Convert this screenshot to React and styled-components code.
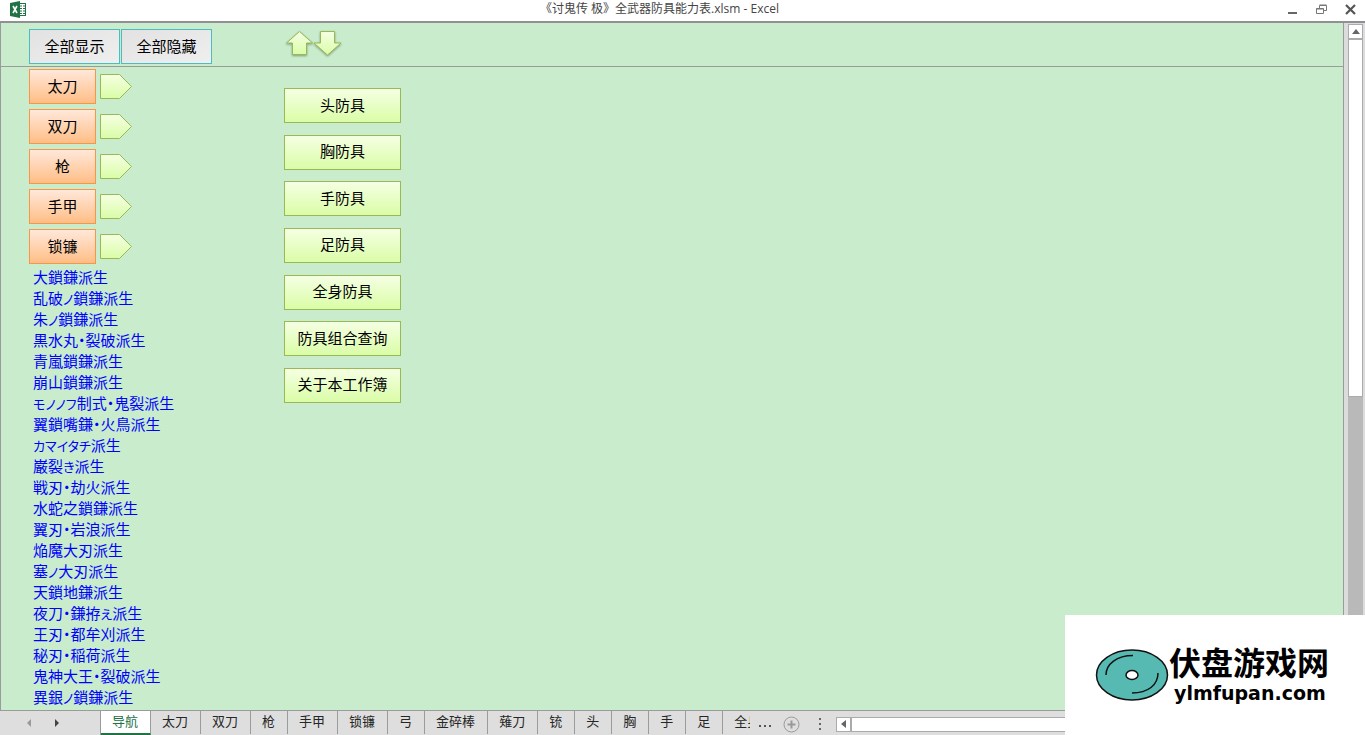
import React from 'react';
import styled, { createGlobalStyle } from 'styled-components';

const GlobalStyle = createGlobalStyle`
  *, *::before, *::after { box-sizing: border-box; }
  body { margin: 0; background: #fff; }
  button { font: inherit; color: inherit; margin: 0; padding: 0; cursor: pointer; }
`;

const Window = styled.div`
  position: relative;
  display: flex;
  flex-direction: column;
  height: 100vh;
  overflow: hidden;
  font-family: 'Noto Sans CJK SC', sans-serif;
  color: #000;
`;

const TitleBar = styled.header`
  display: grid;
  grid-template-columns: 1fr auto 1fr;
  align-items: center;
  flex: none;
  height: 21px;
  padding: 0 8px 2px 10px;
  background: #fff;
`;

const Title = styled.h1`
  margin: 0;
  padding-right: 48px;
  padding-bottom: 1px;
  font: 400 12px/18px 'Open Sans', 'Noto Sans CJK SC', sans-serif;
  color: #444;
  white-space: nowrap;
`;

const WindowControls = styled.div`
  display: flex;
  justify-content: flex-end;
  gap: 15px;
`;

const PlainButton = styled.button`
  display: flex;
  align-items: center;
  justify-content: center;
  flex: none;
  width: ${(p) => p.$width || 14}px;
  height: 14px;
  border: 0;
  background: none;
`;

const Workspace = styled.main`
  display: flex;
  flex: 1;
  min-height: 0;
  border-top: 2px solid #8f8f94;
  background: #dcdcdc;
`;

const Sheet = styled.div`
  flex: 1;
  display: flex;
  flex-direction: column;
  min-width: 0;
  overflow: hidden;
  border: 1px solid #9b9b9b;
  border-top: 0;
  background: #c8eccc;
`;

const FrozenPane = styled.div`
  display: flex;
  flex: none;
  height: 44px;
  padding: 6px 0 0 28px;
  border-bottom: 1px solid #9b9b9b;
`;

const ShapeButton = styled.button`
  width: ${(p) => p.$width}px;
  height: 35px;
  padding-bottom: 2px;
  border: 1px solid;
  font-size: 15px;
  line-height: 20px;
  white-space: nowrap;
`;

const GreyButton = styled(ShapeButton)`
  margin-right: 1px;
  border-color: #4bbcc0;
  background: linear-gradient(160deg, #e2e2e2, #efefef);
`;

const OrangeButton = styled(ShapeButton)`
  border-color: #f79646;
  background: linear-gradient(#ffe8da, #ffbe86);
`;

const GreenButton = styled(ShapeButton)`
  border-color: #98b954;
  background: linear-gradient(#f5ffe3, #dafda7);
`;

const ScrollArrows = styled.div`
  display: flex;
  margin-left: 74px;
`;

const ArrowButton = styled.button`
  width: 27px;
  height: 30px;
  border: 0;
  background: none;

  svg { display: block; overflow: visible; filter: drop-shadow(0 1px 1px rgba(0, 0, 0, 0.35)); }
`;

const Cells = styled.div`
  display: flex;
  flex: 1;
  min-height: 0;
  overflow: hidden;
  padding: 2px 0 0 28px;
`;

const WeaponColumn = styled.nav`
  width: 255px;
`;

const WeaponRow = styled.div`
  display: flex;
  align-items: center;
  gap: 4px;
  margin-bottom: 5px;
`;

const TagButton = styled.button`
  width: 33px;
  height: 26px;
  border: 0;
  background: none;

  svg { display: block; }
`;

const LinkList = styled.ul`
  margin: -3px 0 0;
  padding: 0 0 0 4px;
  list-style: none;
  font: 400 15px/21px 'Noto Sans CJK JP', sans-serif;
  font-feature-settings: 'palt';

  li { height: 21px; }
`;

const DeriveLink = styled.a`
  color: #0000ff;
  text-decoration: none;
  white-space: nowrap;
`;

const Kana = styled.span`
  font-size: 13px;
  line-height: 13px;
`;

const ArmorColumn = styled.nav`
  display: flex;
  flex-direction: column;
  justify-content: space-between;
  height: 315px;
  margin-top: 19px;
`;

const VerticalScroll = styled.div`
  display: flex;
  flex-direction: column;
  flex: none;
  width: 21px;
  padding: 1px 2px 0 4px;
`;

const ScrollButton = styled.button`
  display: flex;
  align-items: center;
  justify-content: center;
  flex: none;
  width: 15px;
  height: 15px;
  border: 1px solid #ababab;
  background: #fff;
`;

const VerticalTrack = styled.div`
  flex: 1;
  background: #b9b9b9;
`;

const VerticalThumb = styled.div`
  height: 53.3%;
  border: 1px solid #ababab;
  background: #fff;
`;

const TabBar = styled.footer`
  display: flex;
  flex: none;
  height: 24px;
  background: #dedede;
  color: #262626;
  font-size: 13px;
  line-height: 20px;
`;

const TabArrows = styled.div`
  display: flex;
  align-items: center;
  flex: none;
  gap: 14px;
  width: 101px;
  padding-left: 22px;
  border-right: 1px solid #9b9b9b;
`;

const Tabs = styled.div`
  display: flex;
  flex: none;
`;

const Tab = styled.button`
  height: 23px;
  padding: 0 12px 4px 11px;
  border: 0;
  border-right: 1px solid #9b9b9b;
  background: none;
  white-space: nowrap;
  line-height: 20px;

  &[aria-selected='true'] {
    height: 24px;
    padding-bottom: 3px;
    border-bottom: 2px solid #217346;
    background: #fff;
    color: #217346;
  }
`;

const CutTab = styled(Tab)`
  width: 27px;
  padding-right: 0;
  border-right: 0;
  overflow: hidden;
  text-align: left;
`;

const TabTools = styled.div`
  display: flex;
  align-items: center;
  flex: none;
  padding: 0 4px 0 6px;
`;

const HorizontalScroll = styled.div`
  display: flex;
  flex: 1;
  align-items: center;
  min-width: 0;
  padding-top: 2px;
`;

const HorizontalThumb = styled.div`
  flex: 1;
  height: 15px;
  border: 1px solid #ababab;
  background: #fff;
`;

const SiteBadge = styled.aside`
  position: absolute;
  right: 0;
  bottom: 0;
  display: flex;
  align-items: center;
  width: 300px;
  height: 120px;
  padding-left: 30px;
  background: #fff;
`;

const BadgeText = styled.div`
  display: flex;
  flex-direction: column;
  gap: 4px;
  font-weight: 700;
  white-space: nowrap;
`;

const BadgeName = styled.span`
  font-size: 32px;
  line-height: 32px;
`;

const BadgeHost = styled.span`
  padding-left: 5px;
  font-family: 'DejaVu Sans', sans-serif;
  font-size: 19px;
  line-height: 24px;
`;

const weapons = ['太刀', '双刀', '枪', '手甲', '锁镰'];

const derivations = [
  '大鎖鎌派生', '乱破ノ鎖鎌派生', '朱ノ鎖鎌派生', '黒水丸・裂破派生', '青嵐鎖鎌派生',
  '崩山鎖鎌派生', 'モノノフ制式・鬼裂派生', '翼鎖嘴鎌・火鳥派生', 'カマイタチ派生', '巌裂き派生',
  '戦刃・劫火派生', '水蛇之鎖鎌派生', '翼刃・岩浪派生', '焔魔大刃派生', '塞ノ大刃派生',
  '天鎖地鎌派生', '夜刀・鎌拵え派生', '王刃・都牟刈派生', '秘刃・稲荷派生', '鬼神大王・裂破派生',
  '異銀ノ鎖鎌派生',
];

const armor = ['头防具', '胸防具', '手防具', '足防具', '全身防具', '防具组合查询', '关于本工作簿'];

const tabs = ['导航', '太刀', '双刀', '枪', '手甲', '锁镰', '弓', '金碎棒', '薙刀', '铳', '头', '胸', '手', '足'];

// Kana are set a little smaller than the kanji around them.
const withKana = (name) =>
  name.split(/([ぁ-ゖァ-ヺ]+)/).map((part, i) => (i % 2 ? <Kana key={i}>{part}</Kana> : part));

const ExcelIcon = () => (
  <svg width="17" height="17" viewBox="0 0 17 17" aria-hidden="true">
    <rect x="8.5" y="2.5" width="7" height="12" fill="#fff" stroke="#217346" />
    <path d="M10 5h2M13 5h2M10 7.5h2M13 7.5h2M10 10h2M13 10h2M10 12.500h2M13 12.500h2" stroke="#217346" strokeWidth="1.200" />
    <path d="M0 2L10 0V17L0 15Z" fill="#217346" />
    <path d="M3 5L7 12M7 5L3 12" stroke="#fff" strokeWidth="1.600" />
  </svg>
);

const Tag = () => (
  <svg width="33" height="26" viewBox="0 0 33 26" aria-hidden="true">
    <path d="M.5.5H19.500L31.500 12.500L19.500 24.500H.5Z" fill="url(#leaf)" stroke="#98b954" />
  </svg>
);

const BlockArrow = ({ down }) => (
  <svg width="27" height="26" viewBox="0 0 27 26" aria-hidden="true">
    <path
      d={down ? 'M6.500 .5H20.500V12H27L13.500 24L0 12H6.500Z' : 'M12.500 .5L25.500 12H19.500V23.500H5.500V12H-.5Z'}
      fill="url(#leaf)"
      stroke="#98b954"
    />
  </svg>
);

const Disc = () => (
  <svg width="74" height="54" viewBox="0 0 74 54" aria-hidden="true">
    <ellipse cx="37" cy="27" rx="35.500" ry="25" fill="#56bab3" stroke="#111" strokeWidth="1.500" />
    <ellipse cx="37" cy="27" rx="6" ry="4.500" fill="#fff" stroke="#111" strokeWidth="1.500" />
    <path d="M11 27C11 16 22 7.500 38 7.500M63 25C63 37 53 45 37 45" fill="none" stroke="#111" strokeWidth="1.500" />
  </svg>
);

export default function App() {
  return (
    <Window>
      <GlobalStyle />
      <svg width="0" height="0" style={{ position: 'absolute' }} aria-hidden="true">
        <defs>
          <linearGradient id="leaf" x1="0" y1="0" x2="0" y2="1">
            <stop offset="0" stopColor="#f5ffe3" />
            <stop offset="1" stopColor="#dafda7" />
          </linearGradient>
        </defs>
      </svg>

      <TitleBar>
        <ExcelIcon />
        <Title>《讨鬼传 极》全武器防具能力表.xlsm - Excel</Title>
        <WindowControls>
          <PlainButton aria-label="最小化">
            <svg width="11" height="11"><path d="M1 9h9" stroke="#666" strokeWidth="2" /></svg>
          </PlainButton>
          <PlainButton aria-label="还原">
            <svg width="11" height="11" fill="none" stroke="#777">
              <path d="M.5 4.500h7v5h-7zM.5 5h7M3.500 4V1.500h7v5H8M3.500 1h7" />
            </svg>
          </PlainButton>
          <PlainButton aria-label="关闭">
            <svg width="11" height="11"><path d="M1 1L10 10M10 1L1 10" stroke="#555" strokeWidth="2.200" /></svg>
          </PlainButton>
        </WindowControls>
      </TitleBar>

      <Workspace>
        <Sheet>
          <FrozenPane>
            <GreyButton $width={91}>全部显示</GreyButton>
            <GreyButton $width={91}>全部隐藏</GreyButton>
            <ScrollArrows>
              <ArrowButton aria-label="向上"><BlockArrow /></ArrowButton>
              <ArrowButton aria-label="向下"><BlockArrow down /></ArrowButton>
            </ScrollArrows>
          </FrozenPane>
          <Cells>
            <WeaponColumn>
              {weapons.map((name) => (
                <WeaponRow key={name}>
                  <OrangeButton $width={67}>{name}</OrangeButton>
                  <TagButton aria-label={`展开${name}`}><Tag /></TagButton>
                </WeaponRow>
              ))}
              <LinkList>
                {derivations.map((name) => (
                  <li key={name}><DeriveLink href="#">{withKana(name)}</DeriveLink></li>
                ))}
              </LinkList>
            </WeaponColumn>
            <ArmorColumn>
              {armor.map((name) => (
                <GreenButton key={name} $width={117}>{name}</GreenButton>
              ))}
            </ArmorColumn>
          </Cells>
        </Sheet>
        <VerticalScroll>
          <ScrollButton aria-label="向上滚动">
            <svg width="8" height="5"><path d="M0 5L4 0L8 5Z" fill="#666" /></svg>
          </ScrollButton>
          <VerticalTrack><VerticalThumb /></VerticalTrack>
        </VerticalScroll>
      </Workspace>

      <TabBar>
        <TabArrows>
          <PlainButton aria-label="上一个工作表">
            <svg width="4" height="8"><path d="M4 0V8L0 4Z" fill="#999" /></svg>
          </PlainButton>
          <PlainButton aria-label="下一个工作表">
            <svg width="4" height="8"><path d="M0 0V8L4 4Z" fill="#444" /></svg>
          </PlainButton>
        </TabArrows>
        <Tabs role="tablist">
          {tabs.map((name, i) => (
            <Tab key={name} role="tab" aria-selected={i === 0}>{name}</Tab>
          ))}
          <CutTab role="tab" aria-selected={false}>全身</CutTab>
        </Tabs>
        <TabTools>
          <PlainButton $width={18} aria-label="更多工作表">
            <svg width="12" height="10" fill="#555"><path d="M0 7h2v2H0zM5 7h2v2H5zM10 7h2v2h-2z" /></svg>
          </PlainButton>
          <PlainButton $width={34} aria-label="新工作表">
            <svg width="17" height="17" overflow="visible" fill="none" stroke="#999">
              <circle cx="8.500" cy="9.500" r="7.500" />
              <path d="M4.500 9.500h8M8.500 5.500v8" strokeWidth="2" />
            </svg>
          </PlainButton>
          <PlainButton $width={24} aria-label="调整标签宽度">
            <svg width="2" height="12" overflow="visible" fill="#666"><path d="M0 1h2v2H0zM0 6h2v2H0zM0 11h2v2H0z" /></svg>
          </PlainButton>
        </TabTools>
        <HorizontalScroll>
          <ScrollButton aria-label="向左滚动">
            <svg width="5" height="8"><path d="M5 0V8L0 4Z" fill="#666" /></svg>
          </ScrollButton>
          <HorizontalThumb />
        </HorizontalScroll>
      </TabBar>

      <SiteBadge>
        <Disc />
        <BadgeText>
          <BadgeName>伏盘游戏网</BadgeName>
          <BadgeHost>ylmfupan.com</BadgeHost>
        </BadgeText>
      </SiteBadge>
    </Window>
  );
}
